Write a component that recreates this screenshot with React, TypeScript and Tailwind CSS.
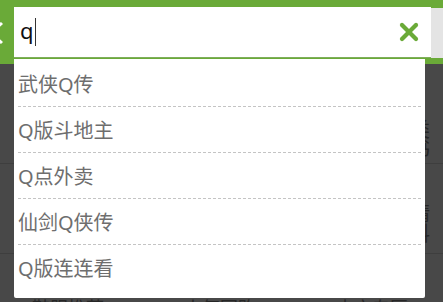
import { X } from "lucide-react";

const suggestions = ["武侠Q传", "Q版斗地主", "Q点外卖", "仙剑Q侠传", "Q版连连看"];

export default function App() {
  return (
    <div
      className="relative w-[443px] h-[302px] overflow-hidden bg-[#484848]"
      style={{ fontFamily: '"Noto Sans", "Noto Sans CJK SC", sans-serif' }}
    >
      {/* search header */}
      <div className="h-[64px] bg-[#6aaa38] pt-[7px] flex items-start">
        <div className="w-[14px] h-[51px] relative">
          <svg width="14" height="51" viewBox="0 0 14 51" className="block">
            <path d="M-9 26 L2 16 M-9 26 L2 36" stroke="#ffffff" strokeWidth="3" fill="none" />
          </svg>
        </div>
        <div className="w-[417px] h-[51px] bg-white border-b border-[#7fae5c] flex items-center pl-[6px] pr-[8px]">
          <span className="text-[22px] leading-none text-[#111] -mt-[4px]">q</span>
          <span className="w-px h-[28px] bg-[#333] ml-[1px]" />
          <div className="flex-1" />
          <X className="size-[28px] text-[#6aaa38]" strokeWidth={3.6} />
        </div>
        <div className="flex-1 h-[50px] mt-px bg-[#e4e4e4]" />
      </div>

      {/* dimmed page behind */}
      <div className="text-[#262626] text-[20px] leading-none">
        <div className="h-[100px] border-b border-[#3e3e3e] relative">
          <span className="absolute left-[410px] top-[56px]">类书</span>
        </div>
        <div className="h-[90px] border-b border-[#3e3e3e] relative">
          <span className="absolute left-[410px] top-[40px]">精料</span>
        </div>
        <div className="flex gap-[80px] pl-[32px] pt-[45px] text-[18px]">
          <span>鞋服推荐</span>
          <span>人气团购</span>
          <span>内衣专区</span>
        </div>
      </div>

      {/* suggestion dropdown */}
      <div className="absolute left-[14px] top-[59px] w-[411px] h-[239px] bg-white rounded-b-[2px] px-[4px] pt-[2px]">
        {suggestions.map((s, i) => (
          <div
            key={s}
            className={
              i < suggestions.length - 1
                ? "h-[46px] flex items-center border-b border-dashed border-[#c4c4c4] text-[20px] text-[#6e6e6e] pt-[2px]"
                : "h-[46px] flex items-center text-[20px] text-[#6e6e6e] pt-[2px]"
            }
          >
            {s}
          </div>
        ))}
      </div>
    </div>
  );
}
